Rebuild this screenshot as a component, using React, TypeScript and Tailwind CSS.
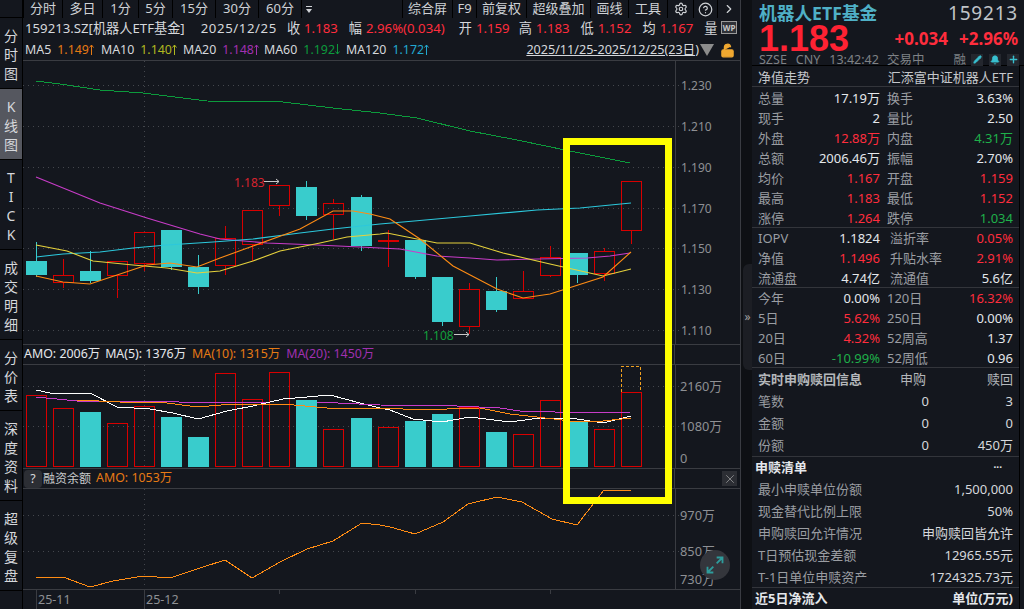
import { ChevronRight, CircleHelp, LockOpen, Pencil, Bell, Plus, Settings, X } from 'lucide-react';

const RED = '#d80000';
const TEAL = '#39cccc';

// x centre, body top, body bottom, wick top, wick bottom, rising, volume top
const candles: [number, number, number, number, number, boolean, number][] = [
  [36, 260, 274, 241, 276, false, 395],
  [63, 274, 281, 258, 287, true, 408],
  [90, 270, 280, 250, 282, false, 412],
  [117, 260, 274, 260, 297, true, 423],
  [144, 231, 262, 231, 270, true, 406],
  [171, 229, 266, 229, 269, false, 417],
  [198, 266, 286, 254, 293, false, 437],
  [225, 237, 264, 225, 274, true, 373],
  [252, 209, 243, 209, 260, true, 399],
  [279, 184, 204, 184, 215, true, 372],
  [306, 186, 215, 180, 219, false, 400],
  [333, 202, 213, 198, 238, true, 429],
  [361, 196, 245, 194, 250, false, 418],
  [388, 240, 240, 229, 266, true, 427],
  [415, 239, 276, 239, 278, false, 421],
  [442, 276, 321, 276, 325, false, 414],
  [469, 288, 325, 282, 333, true, 407],
  [496, 290, 309, 276, 311, false, 432],
  [523, 290, 297, 270, 298, true, 434],
  [550, 256, 274, 245, 276, true, 400],
  [577, 252, 274, 252, 282, false, 422],
  [604, 250, 272, 247, 280, true, 429],
  [631, 180, 229, 180, 243, true, 392],
];

const ma60 = '36,80 60,83 100,89 143,92 207,100 283,101 333,107 380,112 417,117 470,130 517,139 570,150 630,162';
const ma20 = '36,176 100,202 147,217 200,233 220,238 267,242 317,244 360,246 380,247 400,248 437,255 470,257 497,259 537,258 587,257 610,255 630,252';
const ma120 = '36,256 63,253 100,251 133,247 167,244 213,241 253,238 300,232 333,228 380,223 403,221 470,215 537,209 580,207 631,202';
const ma10 = '36,244 67,250 93,260 133,264 167,267 197,272 220,270 253,260 280,250 320,242 347,236 380,233 387,232 437,242 470,242 503,252 550,263 603,275 631,268';
const ma5 = '36,275 63,281 90,283 117,274 147,264 170,262 197,266 220,257 253,245 300,228 333,210 353,210 370,213 390,218 420,238 453,265 497,288 523,297 550,293 603,276 631,251';

const volWhite = '36,390 50,393 90,393 117,407 150,409 173,413 198,419 227,411 253,406 283,399 307,397 330,395 360,403 380,408 390,410 413,419 442,422 470,417 510,422 540,418 577,419 603,423 631,416';
const volMagenta = '36,397 77,401 157,401 200,403 267,402 317,402 380,405 457,406 500,408 520,411 590,413 631,412';
const volOrange = '77,400 120,402 160,402 197,407 233,404 283,404 327,408 380,408 403,409 447,409 480,408 510,414 537,417 570,421 603,421 631,418';
const finLine = '36,578 63,577 90,587 113,581 143,576 170,578 200,568 225,560 252,578 280,562 307,549 333,541 362,523 380,525 390,527 415,534 443,522 468,504 497,497 522,502 552,519 577,525 604,490 631,490';

const leftTabs: [string, string][] = [
  ['分时', 'w-[39px]'],
  ['多日', 'w-[40px]'],
  ['1分', 'w-[36px]'],
  ['5分', 'w-[34px]'],
  ['15分', 'w-[43px]'],
  ['30分', 'w-[43px]'],
  ['60分', 'w-[43px]'],
];

const rightTabs: [string, string][] = [
  ['综合屏', 'w-[50px]'],
  ['F9', 'w-[24px]'],
  ['前复权', 'w-[50px]'],
  ['超级叠加', 'w-[64px]'],
  ['画线', 'w-[38px]'],
  ['工具', 'w-[39px]'],
];

const railItems: [string[], string][] = [
  [['分', '时', '图'], 'h-[71px]'],
  [['K', '线', '图'], 'h-[71px] bg-[#55575f]'],
  [['T', 'I', 'C', 'K'], 'h-[90px]'],
  [['成', '交', '明', '细'], 'h-[90px]'],
  [['分', '价', '表'], 'h-[71px]'],
  [['深', '度', '资', '料'], 'h-[90px]'],
  [['超', '级', '复', '盘'], 'h-[90px]'],
];

function Trace({ points, color, soft }: { points: string; color: string; soft?: boolean }) {
  if (soft) return <polyline points={points} fill="none" stroke={color} strokeWidth={1.1} />;
  return <polyline points={points} fill="none" stroke={color} strokeWidth={1} shapeRendering="crispEdges" />;
}

function GridLine({ y }: { y: number }) {
  return <line x1={23} x2={680} y1={y + 0.5} y2={y + 0.5} stroke="#44474d" strokeDasharray="1 4" />;
}

function MainChart() {
  const ticks: [string, number][] = [
    ['1.230', 84],
    ['1.210', 125],
    ['1.190', 166],
    ['1.170', 207],
    ['1.150', 247],
    ['1.130', 288],
    ['1.110', 329],
  ];
  return (
    <svg viewBox="23 60 717 284" className="w-[717px] h-[284px]">
      {ticks.map(([label, y]) => (
        <g key={label}>
          <GridLine y={y} />
          <text x={681} y={y + 5} fontSize={12} fill="#8e9094">
            {label}
          </text>
        </g>
      ))}
      <line x1={144.5} x2={144.5} y1={60} y2={344} stroke="#44474d" strokeDasharray="1 4" />
      <line x1={675.5} x2={675.5} y1={60} y2={344} stroke="#3a3c42" />
      {candles.map(([x, top, bottom, wickTop, wickBottom, rising]) => {
        const color = rising ? RED : TEAL;
        return (
          <g key={x} shapeRendering="crispEdges">
            <line x1={x + 0.5} x2={x + 0.5} y1={wickTop} y2={top} stroke={color} />
            <line x1={x + 0.5} x2={x + 0.5} y1={bottom} y2={wickBottom} stroke={color} />
            {top === bottom ? (
              <line x1={x - 10} x2={x + 11} y1={top} y2={top} stroke={color} strokeWidth={2} />
            ) : rising ? (
              <rect x={x - 10 + 0.5} y={top + 0.5} width={20} height={bottom - top} fill="none" stroke={color} />
            ) : (
              <rect x={x - 10} y={top} width={21} height={bottom - top} fill={color} />
            )}
          </g>
        );
      })}
      <Trace points={ma60} color="#0c9a3c" />
      <Trace points={ma20} color="#c83cc8" soft />
      <Trace points={ma120} color="#2cc8dc" soft />
      <Trace points={ma10} color="#e6d23c" soft />
      <Trace points={ma5} color="#ff8c14" soft />
      <text x={234} y={186} fontSize={12} fill="#d8232f">
        1.183
      </text>
      <path d="M264 180.5H279M276 178l3 2.5-3 2.5" fill="none" stroke="#c8c8c8" />
      <text x={423} y={339} fontSize={12} fill="#12a03c">
        1.108
      </text>
      <path d="M454 333.5H469M466 331l3 2.5-3 2.5" fill="none" stroke="#c8c8c8" />
    </svg>
  );
}

function VolumeChart() {
  return (
    <svg viewBox="23 365 717 103" className="w-[717px] h-[103px]">
      <GridLine y={386} />
      <GridLine y={426} />
      <line x1={144.5} x2={144.5} y1={365} y2={468} stroke="#44474d" strokeDasharray="1 4" />
      <line x1={675.5} x2={675.5} y1={365} y2={468} stroke="#3a3c42" />
      {candles.map(([x, , , , , rising, volTop]) =>
        rising || x === 36 ? (
          <rect
            key={x}
            x={x - 10 + 0.5}
            y={volTop + 0.5}
            width={20}
            height={466 - volTop}
            fill="none"
            stroke={RED}
            shapeRendering="crispEdges"
          />
        ) : (
          <rect key={x} x={x - 10} y={volTop} width={21} height={467 - volTop} fill={TEAL} />
        ),
      )}
      <path d="M621.5 392V366.5H640.5V392" fill="none" stroke="#f0a020" strokeDasharray="3 2" shapeRendering="crispEdges" />
      <Trace points={volWhite} color="#ffffff" />
      <Trace points={volMagenta} color="#c83cc8" />
      <Trace points={volOrange} color="#ff8c14" />
      <text x={680} y={391} fontSize={12.8} fill="#8e9094">
        2160万
      </text>
      <text x={680} y={431} fontSize={12.8} fill="#8e9094">
        1080万
      </text>
      <text x={680} y={463} fontSize={12.8} fill="#8e9094">
        0
      </text>
    </svg>
  );
}

function FinanceChart() {
  return (
    <svg viewBox="23 489 717 100" className="w-[717px] h-[100px]">
      <GridLine y={515} />
      <GridLine y={551} />
      <line x1={144.5} x2={144.5} y1={489} y2={589} stroke="#44474d" strokeDasharray="1 4" />
      <line x1={675.5} x2={675.5} y1={489} y2={589} stroke="#3a3c42" />
      <Trace points={finLine} color="#ff8c14" />
      <text x={680} y={520} fontSize={12.8} fill="#8e9094">
        970万
      </text>
      <text x={680} y={556} fontSize={12.8} fill="#8e9094">
        850万
      </text>
      <text x={680} y={584} fontSize={12.8} fill="#8e9094">
        730万
      </text>
    </svg>
  );
}

function Rail() {
  return (
    <div className="w-[23px] h-full shrink-0 flex flex-col border-r border-black">
      <div className="h-[18px] border-b border-black" />
      {railItems.map(([chars, size], i) => (
        <div key={i} className={`${size} shrink-0 flex flex-col items-center justify-center pt-[2px] border-b border-black`}>
          {chars.map((c, j) => (
            <span key={j} className="h-[19px] leading-[19px] text-[14px] text-[#d6d8dc]">
              {c}
            </span>
          ))}
        </div>
      ))}
    </div>
  );
}

function TabBar() {
  return (
    <div className="flex h-[18px] text-[13px] text-[#cfd2d6] bg-[#14171e]">
      {leftTabs.map(([label, width]) => (
        <div key={label} className={`${width} flex items-center justify-center border-l border-black`}>
          {label}
        </div>
      ))}
      <div className="w-[14px] flex items-center justify-center border-l border-black">
        <svg viewBox="0 0 8 7" className="w-[8px] h-[7px]" fill="#cfd2d6">
          <rect x={1} y={0} width={6} height={1} />
          <path d="M1 3h6L4 7z" />
        </svg>
      </div>
      <div className="flex-1 border-r border-black" />
      {rightTabs.map(([label, width]) => (
        <div key={label} className={`${width} flex items-center justify-center border-r border-black`}>
          {label}
        </div>
      ))}
      <div className="w-[26px] flex items-center justify-center border-r border-black">
        <Settings size={14} />
      </div>
      <div className="w-[24px] flex items-center justify-center border-r border-black">
        <CircleHelp size={15} />
      </div>
      <div className="w-[22px] flex items-center justify-center">
        <ChevronRight size={14} />
      </div>
    </div>
  );
}

function InfoLine() {
  const pairs: [string, string, string][] = [
    ['收', '1.183', 'ml-[10px]'],
    ['幅', '2.96%(0.034)', 'ml-[11px]'],
    ['开', '1.159', 'ml-[14px]'],
    ['高', '1.183', 'ml-[9px]'],
    ['低', '1.152', 'ml-[11px]'],
    ['均', '1.167', 'ml-[11px]'],
  ];
  return (
    <div className="relative flex items-center h-[22px] pl-[2px] text-[13.2px] text-[#d6d8dc] whitespace-nowrap overflow-hidden">
      <span>159213.SZ[机器人ETF基金]</span>
      <span className="ml-[16px] tracking-[0.6px]">2025/12/25</span>
      {pairs.map(([k, v, margin]) => (
        <span key={k} className={margin}>
          {k}
          <span className="ml-[4px] text-[#ff2d3d]">{v}</span>
        </span>
      ))}
      <span className="ml-[11px]">量</span>
      <div className="absolute right-[3px] top-[3px] w-[16px] h-[13px] border border-[#9a9a9a] bg-[#303238] text-[8px] leading-[11px] font-bold text-center text-[#c8c8c8]">
        WP
      </div>
    </div>
  );
}

function TrendArrow({ up, color }: { up: boolean; color: string }) {
  return (
    <svg viewBox="0 0 5 11" className="inline-block w-[5px] h-[11px]" fill="none" stroke={color} style={{ transform: up ? undefined : 'rotate(180deg)' }}>
      <path d="M2.5 1V11M.5 3.5 2.5 1 4.5 3.5" />
    </svg>
  );
}

function MaLine() {
  const items: [string, string, string, string, boolean][] = [
    ['MA5', '1.149', '#e67a14', 'ml-0', true],
    ['MA10', '1.140', '#b0b820', 'ml-[7px]', true],
    ['MA20', '1.148', '#a030b0', 'ml-[6px]', true],
    ['MA60', '1.192', '#0c9a3c', 'ml-[5px]', false],
    ['MA120', '1.172', '#22a8d0', 'ml-[6px]', true],
  ];
  return (
    <div className="flex items-center h-[20px] pl-[2px] text-[12.4px] text-[#d6d8dc] whitespace-nowrap">
      {items.map(([name, value, color, margin, up]) => (
        <span key={name} className={`${margin} flex items-center`}>
          {name}
          <span className="ml-[6px]" style={{ color }}>
            {value}
          </span>
          <TrendArrow up={up} color={color} />
        </span>
      ))}
      <span className="ml-auto underline text-[12.6px]">2025/11/25-2025/12/25(23日)</span>
      <span className="ml-[1px] w-0 h-0 border-x-[7px] border-x-transparent border-t-[12px] border-t-[#8c8c8c]" />
      <LockOpen size={15} className="ml-[6px] mr-[5px] text-[#f0a830]" fill="#f0a830" />
    </div>
  );
}

function PanelHeader({ children, extra }: { children: React.ReactNode; extra?: React.ReactNode }) {
  return (
    <div className="flex h-[21px] border-y border-[#3a3c42] text-[12.4px] whitespace-nowrap">
      <div className="w-[652px] flex items-center border-r border-[#3a3c42] overflow-hidden">{children}</div>
      <div className="flex-1 flex items-center justify-end pr-[3px]">{extra}</div>
    </div>
  );
}

function ChartColumn() {
  return (
    <div className="relative w-[718px] h-full shrink-0 flex flex-col border-r border-[#3a3c42]">
      <TabBar />
      <InfoLine />
      <MaLine />
      <div className="border-t border-[#3a3c42] h-[284px]">
        <MainChart />
      </div>
      <PanelHeader>
        <span className="ml-[1px] text-[#e6e8ec]">AMO: 2006万</span>
        <span className="ml-[5px] text-[#e6e8ec]">MA(5): 1376万</span>
        <span className="ml-[6px] text-[#e67a14]">MA(10): 1315万</span>
        <span className="ml-[6px] text-[#a030b0]">MA(20): 1450万</span>
      </PanelHeader>
      <VolumeChart />
      <PanelHeader
        extra={
          <div className="w-[15px] h-[15px] bg-[#2c2e34] flex items-center justify-center text-[#c0c0c0]">
            <X size={14} strokeWidth={1} />
          </div>
        }
      >
        <span className="ml-[1px] w-[18px] h-[18px] rounded-sm bg-[#2c2e34] text-center leading-[18px] text-[#d6d8dc]">?</span>
        <span className="ml-[1px] text-[12px] text-[#c8cacc]">融资余额</span>
        <span className="ml-[5px] text-[#e67a14]">AMO: 1053万</span>
      </PanelHeader>
      <FinanceChart />
      <div className="relative flex-1 border-t border-[#3a3c42] text-[12.5px] text-[#8e9094]">
        <span className="absolute left-[15px] top-[1px]">25-11</span>
        <span className="absolute left-[123px] top-[1px]">25-12</span>
        <span className="absolute left-[13px] top-0 h-full border-l border-[#3a3c42]" />
        <span className="absolute left-[121px] top-0 h-full border-l border-[#3a3c42]" />
        <span className="absolute left-[256px] top-0 h-[4px] border-l border-[#3a3c42]" />
        <span className="absolute left-[392px] top-0 h-[4px] border-l border-[#3a3c42]" />
        <span className="absolute left-[527px] top-0 h-[4px] border-l border-[#3a3c42]" />
      </div>
      {/* hand-drawn marker over the last bars */}
      <div className="absolute left-[540px] top-[138px] w-[109px] h-[366px] border-[7px] border-[#ffff00]" />
      <div className="absolute left-[677px] top-[550px] w-[30px] h-[30px] rounded-full bg-[#34363c] flex items-center justify-center">
        <svg viewBox="0 0 24 24" className="w-[20px] h-[20px]" fill="none" stroke="#2e9c9c" strokeWidth={2.2}>
          <path d="M14 3h7v7M21 3l-7 7M10 21H3v-7M3 21l7-7" />
        </svg>
      </div>
    </div>
  );
}

function CollapseStrip() {
  return (
    <div className="w-[11px] h-full shrink-0 bg-[#0e1014] flex flex-col">
      <div className="h-[264px]" />
      <div className="h-[106px] ml-[2px] bg-[#1c1e24] rounded-tl-md rounded-bl-md flex items-center justify-center text-[12px] text-[#a0a0a0]">
        »
      </div>
    </div>
  );
}

function StatRow({
  l1,
  v1,
  c1 = 'text-[#e4e7eb]',
  l2,
  v2,
  c2 = 'text-[#e4e7eb]',
  narrow,
}: {
  l1: string;
  v1: string;
  c1?: string;
  l2: string;
  v2: string;
  c2?: string;
  narrow?: boolean;
}) {
  return (
    <div className="flex h-[20px] items-center pl-[6px] pr-[6px] text-[13px] whitespace-nowrap">
      <span className="text-[#9a9da2] w-[42px]">{l1}</span>
      <span className={`w-[80px] text-right ${c1}`}>{v1}</span>
      <span className={`text-[#9a9da2] w-[50px] ${narrow ? 'ml-[10px]' : 'ml-[7px]'}`}>{l2}</span>
      <span className={`flex-1 text-right ${c2}`}>{v2}</span>
    </div>
  );
}

function InfoRow({ label, value }: { label: string; value: string }) {
  return (
    <div className="flex h-[22px] items-center justify-between pl-[6px] pr-[6px] text-[13px]">
      <span className="text-[#9a9da2]">{label}</span>
      <span className="text-[#d6d8dc]">{value}</span>
    </div>
  );
}

function QuoteRow({ label, buy, sell }: { label: string; buy: string; sell: string }) {
  return (
    <div className="flex h-[22px] items-center pl-[6px] pr-[6px] text-[13px]">
      <span className="text-[#9a9da2] w-[50px]">{label}</span>
      <span className="w-[121px] text-right text-[#d6d8dc]">{buy}</span>
      <span className="flex-1 text-right text-[#d6d8dc]">{sell}</span>
    </div>
  );
}

function SidePanel() {
  const red = 'text-[#ff2d3d]';
  const green = 'text-[#1fb04a]';
  return (
    <div className="flex-1 h-full flex flex-col">
      <div className="h-[66px] pt-[1px] pl-[7px] pr-[6px] border-b border-black flex flex-col">
        <div className="flex items-center justify-between h-[24px]">
          <span className="text-[17.7px] leading-[24px] font-bold text-[#4fb0c6] whitespace-nowrap">机器人ETF基金</span>
          <span className="text-[19px] leading-[24px] tracking-[0.8px] text-[#c0c4c8]">159213</span>
        </div>
        <div className="flex items-center h-[27px]">
          <span className="text-[36px] leading-[27px] font-bold text-[#ff2233] font-['Liberation_Sans',sans-serif]">1.183</span>
          <span className="ml-auto text-[17px] leading-[24px] font-bold text-[#ff2d3d]">+0.034</span>
          <span className="ml-[11px] text-[17px] leading-[24px] font-bold text-[#ff2d3d]">+2.96%</span>
        </div>
        <div className="flex items-center h-[13px] mt-[1px] text-[12.5px] leading-[13px] text-[#7f8286] whitespace-nowrap -mr-[1px]">
          <span>SZSE</span>
          <span className="ml-[9px]">CNY</span>
          <span className="ml-[9px]">13:42:42</span>
          <span className="ml-[8px]">交易中</span>
          <span className="ml-auto mr-[5px]">融</span>
          <span className="w-[12px] h-[12px] bg-[#24272e] flex items-center justify-center">
            <Pencil size={9} className="text-[#38c0d0]" fill="#38c0d0" />
          </span>
          <span className="ml-[6px] w-[12px] h-[12px] bg-[#24272e] flex items-center justify-center">
            <Bell size={10} className="text-[#38c0d0]" fill="#38c0d0" />
          </span>
          <span className="ml-[6px] w-[12px] h-[12px] bg-[#24272e] flex items-center justify-center">
            <Plus size={11} className="text-[#38c0d0]" strokeWidth={3} />
          </span>
        </div>
      </div>
      <div className="flex-1 flex min-h-0">
        <div className="w-[267px] shrink-0">
          <div className="flex h-[21px] items-center justify-between pl-[6px] pr-[6px] pt-[3px] text-[13px] text-[#c4c7cb] border-b border-[#33353b]">
            <span>净值走势</span>
            <span>汇添富中证机器人ETF</span>
          </div>
          <div className="h-[141px] pt-[2px] border-b border-[#33353b]">
            <StatRow l1="总量" v1="17.19万" l2="换手" v2="3.63%" />
            <StatRow l1="现手" v1="2" l2="量比" v2="2.50" />
            <StatRow l1="外盘" v1="12.88万" c1={red} l2="内盘" v2="4.31万" c2={green} />
            <StatRow l1="总额" v1="2006.46万" l2="振幅" v2="2.70%" />
            <StatRow l1="均价" v1="1.167" c1={red} l2="开盘" v2="1.159" c2={red} />
            <StatRow l1="最高" v1="1.183" c1={red} l2="最低" v2="1.152" c2={red} />
            <StatRow l1="涨停" v1="1.264" c1={red} l2="跌停" v2="1.034" c2={green} />
          </div>
          <div className="h-[60px] pt-[1px] border-b border-[#33353b]">
            <StatRow narrow l1="IOPV" v1="1.1824" l2="溢折率" v2="0.05%" c2={red} />
            <StatRow narrow l1="净值" v1="1.1496" c1={red} l2="升贴水率" v2="2.91%" c2={red} />
            <StatRow narrow l1="流通盘" v1="4.74亿" l2="流通值" v2="5.6亿" />
          </div>
          <div className="h-[80px] pt-[1px] border-b border-[#33353b]">
            <StatRow l1="今年" v1="0.00%" l2="120日" v2="16.32%" c2={red} />
            <StatRow l1="5日" v1="5.62%" c1={red} l2="250日" v2="0.00%" />
            <StatRow l1="20日" v1="4.32%" c1={red} l2="52周高" v2="1.37" />
            <StatRow l1="60日" v1="-10.99%" c1={green} l2="52周低" v2="0.96" />
          </div>
          <div className="h-[89px] pt-[1px] border-b border-[#33353b]">
            <div className="flex h-[22px] items-center pl-[6px] pr-[6px] text-[13px] text-[#b4b7bb]">
              <span className="font-bold w-[142px]">实时申购赎回信息</span>
              <span>申购</span>
              <span className="ml-auto">赎回</span>
            </div>
            <QuoteRow label="笔数" buy="0" sell="3" />
            <QuoteRow label="金额" buy="0" sell="0" />
            <QuoteRow label="份额" buy="0" sell="450万" />
          </div>
          <div className="flex h-[21px] items-center justify-between pl-[3px] pr-[17px] text-[13px] font-bold text-[#e4e7eb]">
            <span>申赎清单</span>
            <span className="text-[10px]">···</span>
          </div>
          <div className="h-[110px] pt-[1px] border-b border-[#33353b]">
            <InfoRow label="最小申赎单位份额" value="1,500,000" />
            <InfoRow label="现金替代比例上限" value="50%" />
            <InfoRow label="申购赎回允许情况" value="申购赎回皆允许" />
            <InfoRow label="T日预估现金差额" value="12965.55元" />
            <InfoRow label="T-1日单位申赎资产" value="1724325.73元" />
          </div>
          <div className="flex h-[21px] items-center justify-between pl-[3px] pr-[6px] text-[13px] font-bold text-[#e4e7eb]">
            <span>近5日净流入</span>
            <span>单位(万元)</span>
          </div>
        </div>
        <div className="flex-1 border-l border-black" />
      </div>
    </div>
  );
}

export default function App() {
  return (
    <div className="flex w-[1024px] h-[609px] overflow-hidden bg-[#14171e] font-['Noto_Sans','Noto_Sans_CJK_SC',sans-serif]">
      <Rail />
      <ChartColumn />
      <CollapseStrip />
      <SidePanel />
    </div>
  );
}
